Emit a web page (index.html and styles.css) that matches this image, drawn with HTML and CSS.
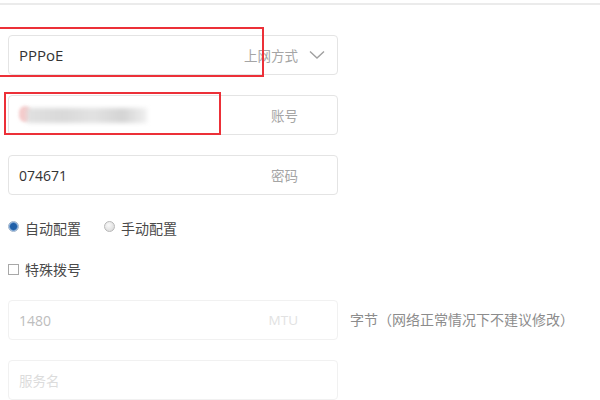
FILE: index.html
```html
<!DOCTYPE html>
<html lang="zh-CN">
<head>
    <meta charset="UTF-8">
    <meta name="viewport" content="width=device-width, initial-scale=1.0">
    <title>上网设置</title>
    <link rel="stylesheet" href="styles.css">
</head>
<body>
    <div class="page">
        <div class="top-line"></div>

        <div class="form">
            <!-- 上网方式 -->
            <div class="field">
                <span class="value value-type">PPPoE</span>
                <span class="label">上网方式
                    <svg class="chevron" width="16" height="10" viewBox="0 0 16 10">
                        <path d="M1 1.5 L8 8 L15 1.5" fill="none" stroke="#a0a0a0" stroke-width="1.4"/>
                    </svg>
                </span>
            </div>

            <!-- 账号 (已打码) -->
            <div class="field field-label-right">
                <span class="blurred"><span class="blur-dot"></span><span class="blur-bar"></span></span>
                <span class="label">账号</span>
            </div>

            <!-- 密码 -->
            <div class="field field-label-right">
                <span class="value">074671</span>
                <span class="label">密码</span>
            </div>

            <div class="radio-row">
                <label class="option"><span class="radio radio-on"></span>自动配置</label>
                <label class="option"><span class="radio"></span>手动配置</label>
            </div>

            <div class="check-row">
                <label class="option"><span class="checkbox"></span>特殊拨号</label>
            </div>

            <div class="mtu-row">
                <div class="field field-off field-label-right">
                    <span class="value">1480</span>
                    <span class="label">MTU</span>
                </div>
                <span class="hint">字节（网络正常情况下不建议修改）</span>
            </div>

            <div class="field field-off">
                <span class="placeholder">服务名</span>
            </div>
        </div>

        <!-- 红色标注框 -->
        <div class="mark mark-type"></div>
        <div class="mark mark-account"></div>
    </div>
</body>
</html>
```

FILE: styles.css
```css
* {
  margin: 0;
  padding: 0;
  box-sizing: border-box;
}

body {
  font-family: "Open Sans", "Noto Sans CJK SC", sans-serif;
  background: #fff;
  color: #333;
  width: 600px;
  height: 400px;
  overflow: hidden;
}

.page {
  position: relative;
  height: 400px;
}

/* Linia u góry */
.top-line {
  margin-top: 3px;
  height: 2px;
  background: #ebebeb;
}

.form {
  padding: 30px 8px 0;
  display: flex;
  flex-direction: column;
}

/* Pola */
.field {
  width: 330px;
  height: 40px;
  border: 1px solid #e4e4e4;
  border-radius: 4px;
  display: flex;
  align-items: center;
  justify-content: space-between;
  padding: 0 12px 0 10px;
  font-size: 14px;
  margin-bottom: 20px;
}

.field-label-right {
  padding-right: 39px;
}

.value {
  color: #333;
}

.value-type {
  font-size: 15px;
}

.label {
  color: #a5a5a5;
  font-size: 13.5px;
  display: flex;
  align-items: center;
}

.chevron {
  margin-left: 11px;
}

/* Zamazany tekst */
.blurred {
  position: relative;
  display: flex;
  align-items: center;
  height: 24px;
  width: 130px;
}

.blur-dot {
  position: absolute;
  left: 0;
  top: 3px;
  width: 12px;
  height: 16px;
  border-radius: 6px;
  background: #f4cccc;
  filter: blur(1.5px);
}

.blur-bar {
  position: absolute;
  left: 8px;
  top: 5px;
  width: 120px;
  height: 15px;
  background: linear-gradient(90deg, #e0e0e0 0%, #d9d9d9 30%, #e2e2e2 55%, #d4d4d4 80%, #f0f0f0 100%);
  filter: blur(2px);
}

/* Radio i checkbox */
.radio-row {
  margin-top: 3px;
  height: 20px;
  display: flex;
  align-items: center;
  gap: 23px;
  font-size: 14px;
}

.check-row {
  margin-top: 21px;
  height: 20px;
  display: flex;
  align-items: center;
  font-size: 14px;
}

.option {
  display: flex;
  align-items: center;
  gap: 6px;
  color: #4a4a4a;
}

.radio {
  width: 11px;
  height: 11px;
  border-radius: 50%;
  border: 1px solid #b8b8b8;
  background: radial-gradient(circle at 40% 35%, #fafafa, #d4d4d4);
  margin-top: -3px;
}

.radio-on {
  border-color: #9fb4cc;
  background: radial-gradient(circle, #1f5fa8 0 3px, #6d9bd0 4px, #dfe8f2 5px);
}

.checkbox {
  width: 11px;
  height: 11px;
  border: 1px solid #a8a8a8;
  background: #fff;
}

/* MTU */
.mtu-row {
  margin-top: 21px;
  display: flex;
  align-items: flex-start;
  gap: 12px;
}

.field-off {
  border-color: #f1f1f1;
}

.field-off .value {
  color: #bdbdbd;
}

.field-off .label {
  color: #e2e2e2;
}

.hint {
  line-height: 40px;
  color: #8c8c8c;
  font-size: 14px;
}

.placeholder {
  color: #dcdcdc;
  font-size: 13.5px;
}

/* Czerwone ramki */
.mark {
  position: absolute;
  border: 2px solid #ec3038;
}

.mark-type {
  left: -4px;
  top: 24px;
  width: 268px;
  height: 50px;
}

.mark-account {
  left: 4px;
  top: 89px;
  width: 217px;
  height: 43px;
}
```
